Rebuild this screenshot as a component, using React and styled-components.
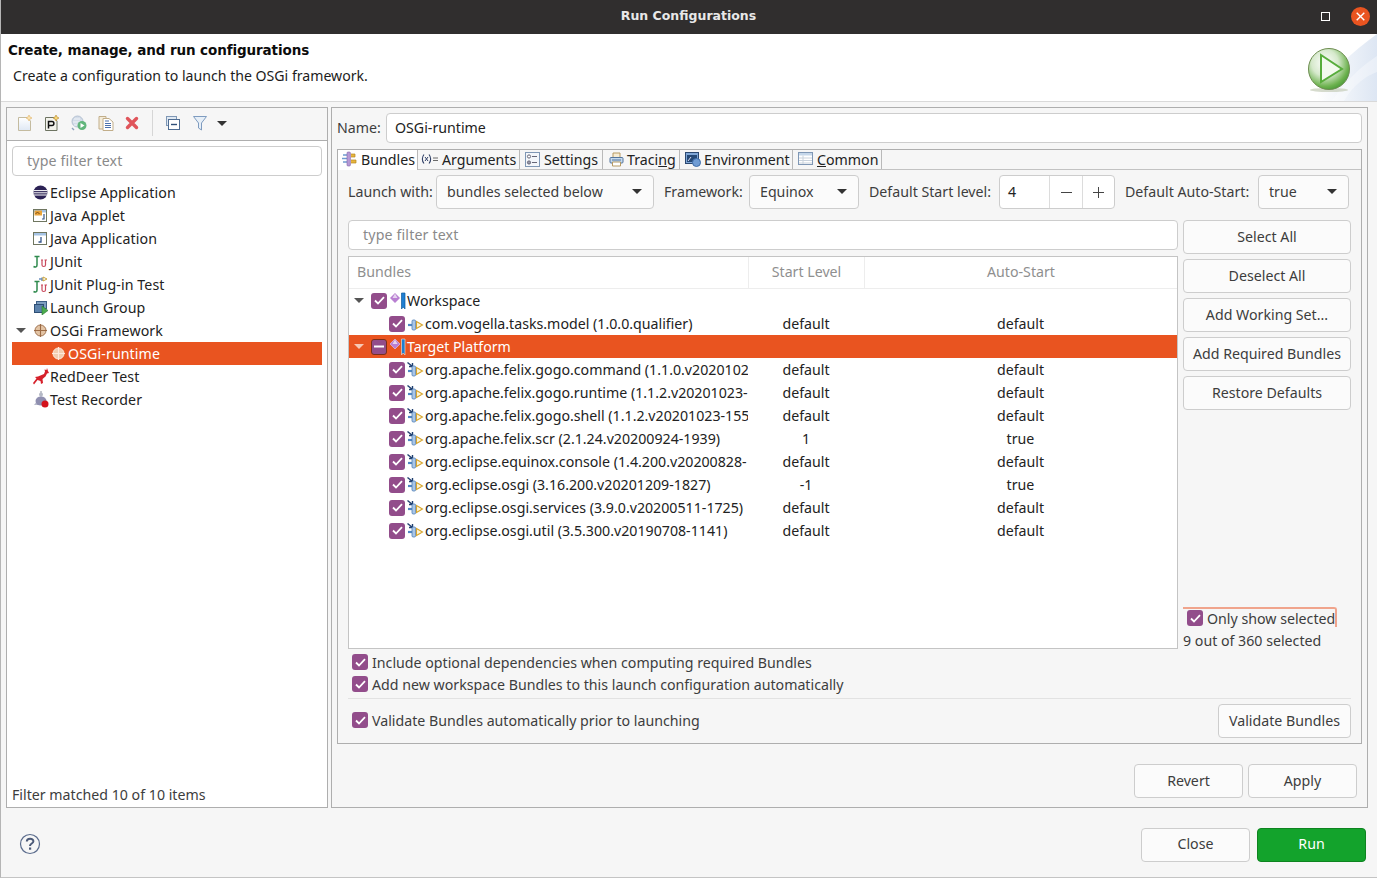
import React from 'react';
import styled, { createGlobalStyle } from 'styled-components';

const Global = createGlobalStyle`
  html, body { margin: 0; padding: 0; background: #f6f6f6; }
  * { box-sizing: border-box; }
  body { font-family: "Noto Sans", "Open Sans", sans-serif; font-size: 14.2px; color: #3d3d3d; overflow: hidden; }
`;

const Win = styled.div`
  width: 1377px; height: 878px; display: flex; flex-direction: column; background: #f6f6f6;
  border-left: 1px solid #b5b5b5; border-bottom: 1px solid #c4c4c4; overflow: hidden;
`;
const TitleBar = styled.div`
  height: 34px; flex: none; background: #302e2e; display: grid; grid-template-columns: 1fr auto 1fr; align-items: center;
`;
const Title = styled.div`
  grid-column: 2; color: #e8e8e8; font-family: "DejaVu Sans", sans-serif; font-weight: 700; font-size: 12.5px; padding-bottom: 3px; padding-right: 1px;
`;
const WinButtons = styled.div`
  grid-column: 3; justify-self: end; display: flex; align-items: center; gap: 20px; padding: 0 7px 2px 0;
`;
const MaxBtn = styled.div`
  width: 9px; height: 9px; border: 1.5px solid #fff; margin-right: 1px;
`;
const CloseBtn = styled.div`
  width: 19px; height: 19px; border-radius: 50%; background: #e95420; display: flex; align-items: center; justify-content: center;
`;
const Header = styled.div`
  height: 68px; flex: none; background: #fff; border-bottom: 1px solid #d9d9d9; display: flex; justify-content: space-between;
`;
const HeaderText = styled.div`
  padding: 7px 0 0 7px; display: flex; flex-direction: column;
`;
const HeaderTitle = styled.div`
  font-family: "DejaVu Sans", sans-serif; font-weight: 700; font-size: 13.5px; color: #0c0c0c; line-height: 18px; letter-spacing: -0.1px;
`;
const HeaderSub = styled.div`
  color: #1c1c1c; font-size: 14.12px; line-height: 20px; margin: 7px 0 0 5px;
`;
const Body = styled.div`
  flex: none; height: 701px; margin: 5px 9px 0 5px; display: grid; grid-template-columns: 322px minmax(0, 1fr); gap: 3px;
`;
const Panel = styled.div`
  border: 1px solid #aeaeae; display: flex; flex-direction: column; min-height: 0; min-width: 0;
`;
const LeftPanel = styled(Panel)`background: #fff;`;
const Toolbar = styled.div`
  height: 33px; flex: none; background: #f6f6f6; border-bottom: 1px solid #aeaeae; display: flex; align-items: center; padding: 0 0 2px 5px;
`;
const ToolIcon = styled.div`
  width: ${p => p.$w || 26.75}px; height: 24px; display: flex; align-items: center; justify-content: center; flex: none;
`;
const ToolSep = styled.div`
  width: 1px; height: 26px; background: #d6d6d6; margin: 0 7px 0 6px;
`;
const FilterInput = styled.div`
  height: 30px; border: 1px solid #cdcdcd; border-radius: 4px; background: #fff; color: #8a8a8a; letter-spacing: 0.15px;
  display: flex; align-items: center; padding: 0 0 2px 14px;
`;
const LeftFilter = styled(FilterInput)`margin: 5px; flex: none;`;
const Tree = styled.div`flex: 1; min-height: 0; letter-spacing: 0.1px;`;
const NavRow = styled.div`
  height: 23px; margin: 0 5px; display: flex; align-items: center; padding-left: ${p => p.$indent}px;
  background: ${p => (p.$sel ? '#e95420' : 'transparent')}; color: ${p => (p.$sel ? '#fff' : '#222')}; white-space: nowrap;
`;
const NavIconSlot = styled.div`
  width: 17px; flex: none; display: flex; align-items: center;
`;
const NavExpander = styled.div`
  width: 0; height: 0; margin: 0 7px 0 -17px; border-left: 5px solid transparent; border-right: 5px solid transparent; border-top: 5px solid #555; flex: none;
`;
const NavFoot = styled.div`
  height: 27px; padding: 5px 0 0 5px; flex: none; color: #3d3d3d;
`;
const Expander = styled.div`
  width: 0; height: 0; border-left: 5px solid transparent; border-right: 5px solid transparent; border-top: 5px solid ${p => p.$c || '#555'}; flex: none;
`;
const ExpanderSlot = styled.div`
  width: ${p => p.$w}px; display: flex; justify-content: flex-start; flex: none;
`;
const RightPanel = styled(Panel)`padding: 5px 5px 9px 5px; background: #f6f6f6;`;
const NameRow = styled.div`
  display: flex; align-items: center; gap: 5px; height: 30px; flex: none;
`;
const TextField = styled.div`
  flex: 1; height: 30px; border: 1px solid #cdcdcd; border-radius: 4px; background: #fff; padding: 0 0 2px 8px; display: flex; align-items: center; color: #222;
`;
const Folder = styled.div`
  margin-top: 6px; height: 595px; flex: none; border: 1px solid #aeaeae; display: flex; flex-direction: column;
`;
const TabBar = styled.div`
  height: 20px; flex: none; display: flex; border-bottom: 1px solid #c2c2c2;
`;
const Tab = styled.div`
  width: ${p => p.$w}px; flex: none; display: flex; align-items: center; gap: ${p => p.$gap ?? 3}px; padding: 0 0 ${p => (p.$active ? 2 : 1)}px ${p => p.$pad || 3}px; height: ${p => (p.$active ? 20 : 19)}px;
  background: ${p => (p.$active ? '#fff' : 'transparent')}; border-right: 1px solid #b9b9b9; white-space: nowrap; color: #222;
`;
const FolderBody = styled.div`
  flex: 1; padding: 5px 10px 0 10px; display: flex; flex-direction: column; min-height: 0;
`;
const LaunchRow = styled.div`
  height: 34px; flex: none; display: flex; align-items: center; white-space: nowrap;
`;
const Lbl = styled.div`
  width: ${p => p.$w}px; flex: none; color: #3d3d3d; padding-bottom: 2px;
`;
const Select = styled.div`
  width: ${p => p.$w}px; height: 34px; flex: none; border: 1px solid #cdcdcd; border-radius: 4px; background: #fbfbfb; display: flex; align-items: center; justify-content: space-between;
  padding: 0 11px 2px 10px; margin-right: 10px; color: #3d3d3d;
  &:last-child { margin-right: 0; }
`;
const Spinner = styled.div`
  width: 116px; height: 34px; flex: none; border: 1px solid #cdcdcd; border-radius: 4px; background: #fff; display: grid; grid-template-columns: 49px 33px 1fr; margin-right: 10px;
`;
const SpinValue = styled.div`
  display: flex; align-items: center; padding: 0 0 2px 8px; color: #222;
`;
const SpinStep = styled.div`
  display: flex; align-items: center; justify-content: center; border-left: 1px solid #dcdcdc;
`;
const MainGrid = styled.div`
  margin-top: 11px; height: 429px; flex: none; display: grid; grid-template-columns: 830px 168px; column-gap: 5px;
`;
const TableCol = styled.div`
  display: flex; flex-direction: column; min-height: 0;
`;
const Table = styled.div`
  margin-top: 6px; flex: 1; border: 1px solid #c4c4c4; background: #fff; min-height: 0;
`;
const HeadRow = styled.div`
  height: 32px; display: grid; grid-template-columns: 400px 116px 1fr; color: #8f8f8f; border-bottom: 1px solid #ededed; align-items: stretch;
`;
const HeadCell = styled.div`
  display: flex; align-items: center; justify-content: ${p => (p.$left ? 'flex-start' : 'center')}; padding: 0 0 2px ${p => (p.$left ? 8 : 0)}px;
  border-right: ${p => (p.$last ? 'none' : '1px solid #ededed')};
`;
const BRow = styled.div`
  height: 23px; display: grid; grid-template-columns: 399px 116px 1fr; align-items: center;
  background: ${p => (p.$sel ? '#e95420' : 'transparent')}; color: ${p => (p.$sel ? '#fff' : '#222')};
`;
const BName = styled.div`
  display: flex; align-items: center; padding-left: ${p => p.$indent}px; overflow: hidden; white-space: nowrap; min-width: 0;
`;
const BCell = styled.div`text-align: center;`;
const Box = styled.div`
  width: 16px; height: 16px; flex: none; border-radius: 3px; background: #924d8b; display: flex; align-items: center; justify-content: center;
  border: ${p => (p.$sel ? '1px solid #7a2f1a' : 'none')};
`;
const SideCol = styled.div`
  display: flex; flex-direction: column; gap: 5px; min-height: 0;
`;
const Btn = styled.div`
  height: 34px; flex: none; width: ${p => (p.$w ? p.$w + 'px' : 'auto')}; border: 1px solid #cdcdcd; border-radius: 4px; background: #fbfbfb; display: flex; align-items: center; justify-content: center; color: #3d3d3d; white-space: nowrap; padding-bottom: 2px;
`;
const RunBtn = styled(Btn)`
  background: #13a32c; border-color: #0e8420; color: #fff;
`;
const SideSpacer = styled.div`flex: 1;`;
const OnlyShow = styled.div`
  height: 20px; display: flex; align-items: center; gap: 4px; width: 154px; border-top: 2px solid #f0a48c; border-right: 2px solid #f0a48c; padding-left: 4px; white-space: nowrap; border-top-right-radius: 3px;
`;
const CountLabel = styled.div`
  height: 20px; display: flex; align-items: center; margin: -2px 0 -1px; white-space: nowrap;
`;
const OptionRow = styled.div`
  height: 22px; display: flex; align-items: center; gap: 4px; padding-left: 4px; color: #3d3d3d; white-space: nowrap;
`;
const ValidateOption = styled(OptionRow)`margin-bottom: 2px;`;
const Options = styled.div`
  margin-top: 2px; flex: none;
`;
const ValidateRow = styled.div`
  border-top: 1px solid #e2e2e2; margin-top: 3px; padding-top: 5px; display: flex; justify-content: space-between; align-items: center; flex: none;
`;
const ActionRow = styled.div`
  margin-top: auto; display: flex; justify-content: flex-end; gap: 5px; padding-right: 5px;
`;
const Footer = styled.div`
  flex: 1; display: flex; align-items: center; justify-content: space-between; padding: 4px 11px 0 18px;
`;
const HelpSlot = styled.div`
  margin-top: -2px; display: flex;
`;
const FooterBtns = styled.div`
  display: flex; gap: 7px;
`;

const Check = () => (
  <svg width="11" height="9" viewBox="0 0 11 9"><path d="M1 4.5 L4 7.5 L10 1.2" fill="none" stroke="#fff" strokeWidth="1.8" /></svg>
);
const CheckBox = ({ mixed, sel }) => (
  <Box $sel={sel}>{mixed ? <svg width="10" height="3"><rect width="10" height="2" y="0.5" fill="#fff" /></svg> : <Check />}</Box>
);
const Arrow = ({ c = '#333' }) => <svg width="10" height="5" viewBox="0 0 10 5"><path d="M0 0H10L5 5Z" fill={c} /></svg>;
const MinusIcon = () => <svg width="11" height="11" viewBox="0 0 11 11"><path d="M0 5.5H11" stroke="#444" /></svg>;
const PlusIcon = () => <svg width="11" height="11" viewBox="0 0 11 11"><path d="M0 5.5H11M5.5 0V11" stroke="#444" /></svg>;

const Spark = ({ x = 12, y = 3, fill = '#f7d774', stroke = '#b8862b' }) => (
  <path d={`M${x} ${y - 3}L${x + 1} ${y - 1}L${x + 3} ${y}L${x + 1} ${y + 1}L${x} ${y + 3}L${x - 1} ${y + 1}L${x - 3} ${y}L${x - 1} ${y - 1}Z`} fill={fill} stroke={stroke} strokeWidth="0.6" />
);
const IconNew = () => (
  <svg width="16" height="16" viewBox="0 0 16 16">
    <defs>
      <linearGradient id="pg" x1="0" y1="0" x2="0" y2="1">
        <stop offset="0" stopColor="#ffffff" />
        <stop offset="1" stopColor="#dfe8f4" />
      </linearGradient>
    </defs>
    <path d="M1.5 2.5H10L13.5 6V15.5H1.5Z" fill="url(#pg)" stroke="#c4bb9f" />
    <Spark fill="#fbe3b0" stroke="#e0b468" />
  </svg>
);
const IconProto = () => (
  <svg width="16" height="16" viewBox="0 0 16 16">
    <path d="M1.5 2.5H10L13 6V15.5H1.5Z" fill="#f3f3ec" stroke="#6e7462" />
    <path d="M4.5 13.5V6.5H8C10.5 6.5 10.5 10.5 8 10.5H4.5" fill="none" stroke="#111" strokeWidth="1.5" />
    <Spark />
  </svg>
);
const IconDup = () => (
  <svg width="16" height="16" viewBox="0 0 16 16">
    <circle cx="6.5" cy="6.5" r="5.5" fill="#d3dce8" stroke="#b3c0d1" />
    <path d="M3 4H9M2 7H10M3 10H9" stroke="#eef2f7" />
    <circle cx="11" cy="10.5" r="4.5" fill="#62b67c" />
    <path d="M9.5 8L13.5 10.5L9.5 13Z" fill="#fff" />
    <path d="M1 13L3 15" stroke="#8ea3bd" strokeWidth="1.4" />
  </svg>
);
const IconDocs = () => (
  <svg width="16" height="16" viewBox="0 0 16 16">
    <path d="M1 1.5H8V14H1Z" fill="#f4ecd9" stroke="#c2ae8a" />
    <path d="M5 3.5H11L15 7V15.5H5Z" fill="#fff" stroke="#c2ae8a" />
    <path d="M7 6H11M7 8.5H13M7 10.5H13M7 12.5H13" stroke="#4a70ad" />
  </svg>
);
const IconDelete = () => (
  <svg width="14" height="14" viewBox="0 0 14 14"><path d="M2.5 2.5L11.5 11.5M11.5 2.5L2.5 11.5" stroke="#e0555b" strokeWidth="3.4" strokeLinecap="round" /></svg>
);
const IconCollapse = () => (
  <svg width="14" height="14" viewBox="0 0 14 14">
    <rect x="0.5" y="0.5" width="10" height="9" fill="#dfe8f2" stroke="#7f97b5" />
    <rect x="2.5" y="3.5" width="11" height="10" fill="#fff" stroke="#4f6d93" />
    <path d="M5 8.5H11" stroke="#2f4f78" strokeWidth="1.4" />
  </svg>
);
const IconFilter = () => (
  <svg width="14" height="16" viewBox="0 0 14 16">
    <path d="M0.5 1.5H13.5L8.5 8V15L5.5 13V8Z" fill="#e7eff7" stroke="#7f9cc0" />
  </svg>
);
const IconEclipse = () => (
  <svg width="15" height="15" viewBox="0 0 15 15">
    <circle cx="7.5" cy="7.5" r="7" fill="#2c2255" />
    <path d="M0.7 5.6H14.3M0.5 7.8H14.5M1 10H14" stroke="#fff" strokeWidth="1" />
  </svg>
);
const IconWin = ({ children }) => (
  <svg width="14" height="13" viewBox="0 0 14 13">
    <rect x="0.5" y="0.5" width="13" height="12" fill="#fff" stroke="#6f7660" />
    <rect x="1" y="1" width="12" height="2.5" fill="#a5c3e4" />
    {children}
  </svg>
);
const IconApplet = () => (
  <IconWin>
    <rect x="1.5" y="1.5" width="7.5" height="5" fill="#e8a33a" />
    <path d="M2.5 5L4.5 3L6.5 5" stroke="#7a4a12" fill="none" />
    <path d="M11 5V10H9" stroke="#34558b" strokeWidth="1.2" fill="none" />
  </IconWin>
);
const IconApp = () => (
  <IconWin><path d="M8 5V10H5.5" stroke="#34558b" strokeWidth="1.3" fill="none" /></IconWin>
);
const JU = () => (
  <>
    <path d="M1.5 1.5H6.5M4 1.5V10C4 12 2.5 12.5 0.5 11.5" fill="none" stroke="#2f8a4e" strokeWidth="1.5" />
    <path d="M9 5V10C9 12 12.5 12 12.5 10V5M8 5H10M11.5 5H14" fill="none" stroke="#c9495c" strokeWidth="1.2" />
  </>
);
const IconJUnit = () => <svg width="15" height="13" viewBox="0 0 15 13"><JU /></svg>;
const IconJPlug = () => (
  <svg width="16" height="17" viewBox="0 0 16 17">
    <g transform="translate(0,4)"><JU /></g>
    <path d="M6 3H9M9 1.5V5" stroke="#6b8fbf" strokeWidth="1.5" />
    <path d="M10 1L14 3L10 5Z" fill="#fff" stroke="#c9a23a" />
  </svg>
);
const IconGroup = () => (
  <svg width="15" height="15" viewBox="0 0 15 15">
    <rect x="3.5" y="1.5" width="10" height="7" fill="#7f9fc1" stroke="#3d5f86" />
    <rect x="1.5" y="4.5" width="9" height="8" fill="#5c82ac" stroke="#2e4f75" />
    <path d="M9 6L15 10.5L9 15Z" fill="#4bab4f" stroke="#2c7a33" strokeWidth="0.6" />
  </svg>
);
const IconOsgi = ({ light }) => (
  <svg width="15" height="15" viewBox="0 0 15 15">
    <circle cx="7.5" cy="7.5" r="5.5" fill={light ? '#f2cdb0' : '#e3c4a5'} stroke={light ? '#fde9dc' : '#a07350'} />
    <path d="M7.5 1V14M1 7.5H14" stroke={light ? '#fde9dc' : '#9c6b45'} strokeWidth="1.1" />
  </svg>
);
const IconDeer = () => (
  <svg width="16" height="17" viewBox="0 0 16 17">
    <path d="M14 0L13.5 2L11.5 1.5L12 3.5L11 6L5 8.5L2 9L3.5 10.5L0 15L1 16.5L4.5 12L7.5 13L8 16L10 15L9.5 11L12.5 8.5L14 5.5L16 5L15 3Z" fill="#d6202a" />
  </svg>
);
const IconRec = () => (
  <svg width="17" height="17" viewBox="0 0 17 17">
    <path d="M8 0V3" stroke="#8a8fa0" />
    <circle cx="8" cy="3.5" r="2" fill="#b5b9c6" />
    <path d="M1 14L8 5L14 14Z" fill="#b8bbcb" />
    <ellipse cx="8" cy="10" rx="5.5" ry="4.5" fill="#8f8fb0" />
    <circle cx="12" cy="13" r="3.5" fill="#d3121c" />
  </svg>
);
const IconPlugin = ({ mini }) => (
  <svg width="20" height="18" viewBox="0 0 20 18" style={{ flex: 'none' }}>
    {mini && <path d="M2.5 1.5L7.5 5.5M7.5 2V5.5H4" fill="none" stroke="#1f3f70" strokeWidth="1.4" />}
    <path d="M3 10H7" stroke="#4f86c4" strokeWidth="2.2" />
    <rect x="7" y="5" width="3.6" height="10" rx="1.2" fill="#a9c6e8" stroke="#4f7eb4" strokeWidth="0.8" />
    <path d="M11.5 6.5L17.5 10L11.5 13.5Z" fill="#fff6d8" stroke="#d6a52e" strokeWidth="1.1" />
  </svg>
);
const IconTarget = ({ light }) => (
  <svg width="20" height="18" viewBox="0 0 20 18" style={{ flex: 'none' }}>
    <path d="M8 1L13 6L8 11L3 6Z" fill="#b97fd2" stroke="#d9bfe6" strokeWidth="0.7" />
    <path d="M8 1.5L5.5 6H10.5Z" fill="#e6d3ef" />
    <path d="M14.5 1H18V17L16.2 15L14.5 17Z" fill="#1f7fd1" stroke={light ? '#f7d2c2' : '#0d5c9f'} strokeWidth="0.7" />
  </svg>
);
const TabBundles = () => (
  <svg width="16" height="16" viewBox="0 0 16 16">
    <path d="M1 4H5M0 7.5H5M1 11H5" stroke="#6f9ad0" strokeWidth="1.5" />
    <rect x="5" y="1" width="3.4" height="14" rx="1" fill="#b79ad6" stroke="#7f62a8" strokeWidth="0.6" />
    <path d="M9 3H13V6H9M9 9H14V12H9" fill="#e6b63e" stroke="#b78821" strokeWidth="0.7" />
  </svg>
);
const TabArgs = () => (
  <svg width="18" height="12" viewBox="0 0 18 12">
    <path d="M3 1.5C0.8 4 0.8 8 3 10.5M8 1.5C10.2 4 10.2 8 8 10.5" fill="none" stroke="#2f3f66" strokeWidth="1.1" />
    <path d="M4 4L7 8M7 4L4 8" stroke="#2f3f66" />
    <path d="M12 5H17M12 7.5H17" stroke="#6a6a6a" />
  </svg>
);
const TabSettings = () => (
  <svg width="15" height="15" viewBox="0 0 15 15">
    <rect x="0.5" y="0.5" width="14" height="14" fill="#f3f6fa" stroke="#7f97b5" />
    <circle cx="4" cy="4.5" r="1.6" fill="#fff" stroke="#667" />
    <circle cx="4" cy="10.5" r="1.6" fill="#99a" stroke="#667" />
    <path d="M7 4.5H12M7 10.5H12" stroke="#667" />
  </svg>
);
const TabTrace = () => (
  <svg width="15" height="15" viewBox="0 0 15 15">
    <path d="M4 1H11V6H4Z" fill="#f6ecd4" stroke="#b79a62" />
    <rect x="1" y="5.5" width="13" height="5.5" rx="1" fill="#c4d9ee" stroke="#54759c" />
    <path d="M3.5 10H11.5V14H3.5Z" fill="#fff" stroke="#b79a62" />
    <path d="M3 8H12" stroke="#54759c" />
  </svg>
);
const TabEnv = () => (
  <svg width="16" height="15" viewBox="0 0 16 15">
    <rect x="0.5" y="0.5" width="13" height="11" fill="#7fa6d6" stroke="#2c4870" />
    <rect x="2" y="3" width="10" height="7" fill="#264976" />
    <path d="M3 9L6 5" stroke="#dde" />
    <circle cx="11.5" cy="10.5" r="4" fill="#6f9cd4" stroke="#3e6ca8" />
  </svg>
);
const TabCommon = () => (
  <svg width="15" height="14" viewBox="0 0 15 14">
    <rect x="0.5" y="0.5" width="14" height="12" fill="#fff" stroke="#7f97b5" />
    <rect x="1" y="1" width="13" height="2.5" fill="#c5d7ea" />
    <path d="M1 6H14M1 8.5H14M1 11H14M5 3.5V12" stroke="#c9d2dc" />
  </svg>
);
const Banner = () => (
  <svg width="85" height="67" viewBox="0 0 85 67">
    <defs>
      <linearGradient id="wash" x1="0.1" y1="0.5" x2="1" y2="0.5">
        <stop offset="0" stopColor="#ffffff" />
        <stop offset="1" stopColor="#dde6f3" />
      </linearGradient>
      <radialGradient id="ball" cx="0.4" cy="0.35" r="0.72">
        <stop offset="0" stopColor="#ffffff" />
        <stop offset="0.45" stopColor="#d6e9cc" />
        <stop offset="0.8" stopColor="#6db24f" />
        <stop offset="1" stopColor="#3f9432" />
      </radialGradient>
    </defs>
    <path d="M85 0V67H18C36 40 60 18 85 0Z" fill="url(#wash)" />
    <path d="M85 22V38C74 42 62 50 52 67H40C54 46 70 32 85 22Z" fill="#fff" opacity="0.35" />
    <ellipse cx="37" cy="56" rx="19" ry="2" fill="#c4ccb8" opacity="0.7" />
    <circle cx="37" cy="35" r="20.5" fill="url(#ball)" stroke="#6d8d50" />
    <path d="M29 21L50 35L29 48Z" fill="#f4faef" stroke="#58ad3c" strokeWidth="2" />
  </svg>
);
const Help = () => (
  <svg width="22" height="22" viewBox="0 0 22 22">
    <circle cx="11" cy="11" r="9.5" fill="#f6f6f6" stroke="#5a6b8c" strokeWidth="1.2" />
    <path d="M7.8 8.5C7.8 4.8 14.4 4.8 14.4 8.3C14.4 10.6 11 10.5 11 13" fill="none" stroke="#4c5a78" strokeWidth="2" />
    <rect x="10" y="14.5" width="2.2" height="2.2" fill="#4c5a78" />
  </svg>
);

const navItems = [
  { label: 'Eclipse Application', icon: <IconEclipse /> },
  { label: 'Java Applet', icon: <IconApplet /> },
  { label: 'Java Application', icon: <IconApp /> },
  { label: 'JUnit', icon: <IconJUnit /> },
  { label: 'JUnit Plug-in Test', icon: <IconJPlug /> },
  { label: 'Launch Group', icon: <IconGroup /> },
  { label: 'OSGi Framework', icon: <IconOsgi />, exp: true },
  { label: 'OSGi-runtime', icon: <IconOsgi light />, sel: true, indent: 39 },
  { label: 'RedDeer Test', icon: <IconDeer /> },
  { label: 'Test Recorder', icon: <IconRec /> },
];
const tabs = [
  { label: 'Bundles', w: 80, icon: <TabBundles />, active: true, pad: 4, gap: 3 },
  { label: 'Arguments', w: 102, icon: <TabArgs />, pad: 3 },
  { label: 'Settings', w: 83, icon: <TabSettings />, pad: 5, gap: 4 },
  { label: <>Traci<u>n</u>g</>, w: 77, icon: <TabTrace />, pad: 6 },
  { label: 'Environment', w: 113, icon: <TabEnv />, pad: 5 },
  { label: <><u>C</u>ommon</>, w: 89, icon: <TabCommon />, pad: 5, gap: 4 },
];
const bundles = [
  ['org.apache.felix.gogo.command (1.1.0.v2020102', 'default', 'default'],
  ['org.apache.felix.gogo.runtime (1.1.2.v20201023-', 'default', 'default'],
  ['org.apache.felix.gogo.shell (1.1.2.v20201023-155', 'default', 'default'],
  ['org.apache.felix.scr (2.1.24.v20200924-1939)', '1', 'true'],
  ['org.eclipse.equinox.console (1.4.200.v20200828-', 'default', 'default'],
  ['org.eclipse.osgi (3.16.200.v20201209-1827)', '-1', 'true'],
  ['org.eclipse.osgi.services (3.9.0.v20200511-1725)', 'default', 'default'],
  ['org.eclipse.osgi.util (3.5.300.v20190708-1141)', 'default', 'default'],
];
const sideButtons = ['Select All', 'Deselect All', 'Add Working Set...', 'Add Required Bundles', 'Restore Defaults'];

export default function App() {
  return (
    <Win>
      <Global />
      <TitleBar>
        <Title>Run Configurations</Title>
        <WinButtons>
          <MaxBtn />
          <CloseBtn>
            <svg width="9" height="9" viewBox="0 0 9 9"><path d="M0.7 0.7L8.3 8.3M8.3 0.7L0.7 8.3" stroke="#fff" strokeWidth="1.4" /></svg>
          </CloseBtn>
        </WinButtons>
      </TitleBar>
      <Header>
        <HeaderText>
          <HeaderTitle>Create, manage, and run configurations</HeaderTitle>
          <HeaderSub>Create a configuration to launch the OSGi framework.</HeaderSub>
        </HeaderText>
        <Banner />
      </Header>
      <Body>
        <LeftPanel>
          <Toolbar>
            <ToolIcon><IconNew /></ToolIcon>
            <ToolIcon><IconProto /></ToolIcon>
            <ToolIcon><IconDup /></ToolIcon>
            <ToolIcon><IconDocs /></ToolIcon>
            <ToolIcon><IconDelete /></ToolIcon>
            <ToolSep />
            <ToolIcon><IconCollapse /></ToolIcon>
            <ToolIcon><IconFilter /></ToolIcon>
            <ToolIcon $w={17}><Arrow /></ToolIcon>
          </Toolbar>
          <LeftFilter>type filter text</LeftFilter>
          <Tree>
            {navItems.map(n => (
              <NavRow key={n.label} $sel={n.sel} $indent={n.indent || 21}>
                {n.exp && <NavExpander />}
                <NavIconSlot>{n.icon}</NavIconSlot>
                <span>{n.label}</span>
              </NavRow>
            ))}
          </Tree>
          <NavFoot>Filter matched 10 of 10 items</NavFoot>
        </LeftPanel>
        <RightPanel>
          <NameRow>
            <Lbl $w={44}>Name:</Lbl>
            <TextField>OSGi-runtime</TextField>
          </NameRow>
          <Folder>
            <TabBar>
              {tabs.map((t, i) => (
                <Tab key={i} $w={t.w} $active={t.active} $pad={t.pad} $gap={t.gap}>{t.icon}<span>{t.label}</span></Tab>
              ))}
            </TabBar>
            <FolderBody>
              <LaunchRow>
                <Lbl $w={88}>Launch with:</Lbl>
                <Select $w={218}>bundles selected below<Arrow /></Select>
                <Lbl $w={85}>Framework:</Lbl>
                <Select $w={110}>Equinox<Arrow /></Select>
                <Lbl $w={130}>Default Start level:</Lbl>
                <Spinner>
                  <SpinValue>4</SpinValue>
                  <SpinStep><MinusIcon /></SpinStep>
                  <SpinStep><PlusIcon /></SpinStep>
                </Spinner>
                <Lbl $w={133}>Default Auto-Start:</Lbl>
                <Select $w={91}>true<Arrow /></Select>
              </LaunchRow>
              <MainGrid>
                <TableCol>
                  <FilterInput>type filter text</FilterInput>
                  <Table>
                    <HeadRow>
                      <HeadCell $left>Bundles</HeadCell>
                      <HeadCell>Start Level</HeadCell>
                      <HeadCell $last>Auto-Start</HeadCell>
                    </HeadRow>
                    <BRow>
                      <BName $indent={5}>
                        <ExpanderSlot $w={17}><Expander /></ExpanderSlot>
                        <CheckBox />
                        <IconTarget />
                        <span>Workspace</span>
                      </BName>
                    </BRow>
                    <BRow>
                      <BName $indent={40}><CheckBox /><IconPlugin /><span>com.vogella.tasks.model (1.0.0.qualifier)</span></BName>
                      <BCell>default</BCell>
                      <BCell>default</BCell>
                    </BRow>
                    <BRow $sel>
                      <BName $indent={5}>
                        <ExpanderSlot $w={17}><Expander $c="#f7c8b4" /></ExpanderSlot>
                        <CheckBox mixed sel />
                        <IconTarget light />
                        <span>Target Platform</span>
                      </BName>
                    </BRow>
                    {bundles.map(b => (
                      <BRow key={b[0]}>
                        <BName $indent={40}><CheckBox /><IconPlugin mini /><span>{b[0]}</span></BName>
                        <BCell>{b[1]}</BCell>
                        <BCell>{b[2]}</BCell>
                      </BRow>
                    ))}
                  </Table>
                </TableCol>
                <SideCol>
                  {sideButtons.map(s => <Btn key={s}>{s}</Btn>)}
                  <SideSpacer />
                  <OnlyShow><CheckBox /><span>Only show selected</span></OnlyShow>
                  <CountLabel>9 out of 360 selected</CountLabel>
                </SideCol>
              </MainGrid>
              <Options>
                <OptionRow><CheckBox /><span>Include optional dependencies when computing required Bundles</span></OptionRow>
                <OptionRow><CheckBox /><span>Add new workspace Bundles to this launch configuration automatically</span></OptionRow>
              </Options>
              <ValidateRow>
                <ValidateOption><CheckBox /><span>Validate Bundles automatically prior to launching</span></ValidateOption>
                <Btn $w={133}>Validate Bundles</Btn>
              </ValidateRow>
            </FolderBody>
          </Folder>
          <ActionRow>
            <Btn $w={109}>Revert</Btn>
            <Btn $w={109}>Apply</Btn>
          </ActionRow>
        </RightPanel>
      </Body>
      <Footer>
        <HelpSlot><Help /></HelpSlot>
        <FooterBtns>
          <Btn $w={109}>Close</Btn>
          <RunBtn $w={109}>Run</RunBtn>
        </FooterBtns>
      </Footer>
    </Win>
  );
}
